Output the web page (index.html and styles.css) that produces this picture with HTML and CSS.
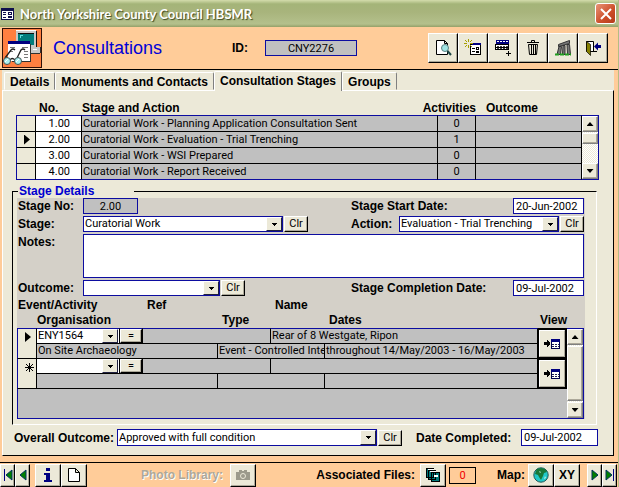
FILE: index.html
```html
<!DOCTYPE html>
<html lang="en">
<head>
<meta charset="utf-8">
<title>North Yorkshire County Council HBSMR</title>
<link rel="stylesheet" href="styles.css">
</head>
<body>
<div class="window">
  <div class="titlebar">
    <svg class="app-icon" width="13" height="12" viewBox="0 0 13 12" shape-rendering="crispEdges" aria-hidden="true"><path fill="#10104c" d="M0 0h13v12H0z"/><path fill="#fff" d="M1 3h11v8H1z"/><path stroke="#10104c" fill="none" d="M2 4.500h3M2 6.500h3M2 9.500h3M7.500 4.500h3v2h-3zM7.500 8.500h3v1h-3z"/></svg>
    <h1 class="window-title">North Yorkshire County Council HBSMR</h1>
    <button class="close" aria-label="Close"><svg width="12" height="12" viewBox="0 0 12 12"><path d="M1 1l10 10M11 1L1 11" stroke="#fff" stroke-width="2"/></svg></button>
  </div>

  <header class="header">
    <svg class="logo" width="40" height="40" viewBox="0 0 40 40" shape-rendering="crispEdges" aria-hidden="true">
      <path fill="#ff7f40" stroke="#301008" d="M.5.5h39v39H.5z"/>
      <path fill="#c8c8c8" d="M14 3h20v16H14z"/><path fill="#fff" d="M14 2h20v1H14z"/><path fill="#101010" d="M34 3h1v16h-1zM16 5h16v1H16z"/><path fill="#007c7c" d="M16 6h16v11H16z"/><path fill="#60e0e0" d="M18 7h3v1h-2v2h-1z"/>
      <path fill="#c8c8c8" d="M28 19h10v6H28z"/><path fill="#303030" d="M28 25h10v1H28zM38 19h1v6h-1z"/><path fill="#fff" d="M31 21h4v1h-4z"/>
      <path fill="#fff" d="M6 13h22v20H6z"/><path fill="#000080" d="M6 13h22v3H6z"/><path fill="#303030" d="M28 16h1v18H10v-1h18z"/>
      <path stroke="#777" fill="none" d="M8 19.500h5M20 19.500h6M22 23.500h4M22 26.500h4M22 29.500h4M8 23.500h3"/>
      <g shape-rendering="auto"><path d="M3 30l6-8q2-2 4 0M15 30l4-8q2-2 4 0M8 32q2-3 5 0" fill="none" stroke="#202020" stroke-width="1.300"/><circle cx="5" cy="33" r="3.500" fill="#a8f0f0" stroke="#405050"/><circle cx="16" cy="33" r="3.500" fill="#a8f0f0" stroke="#405050"/><path d="M3 34l3-3M14 34l3-3" stroke="#fff"/></g>
    </svg>
    <h2 class="form-title">Consultations</h2>
    <label class="id-label" for="cid">ID:</label>
    <input class="field shaded id-field" id="cid" value="CNY2276" readonly>
    <div class="toolbar">
      <button class="btn tool" aria-label="Preview"><svg width="18" height="18" viewBox="0 0 18 18"><path fill="#fff" stroke="#000" d="M2.500 1.500h8l3 3v11h-11zM10.500 1.500v3h3"/><circle cx="11" cy="9" r="3.500" fill="#a0e4e4" stroke="#5c8080"/><path d="M13.500 12l3.500 4" stroke="#204848" stroke-width="2"/></svg></button>
      <button class="btn tool" aria-label="New record"><svg width="18" height="18" viewBox="0 0 18 18" shape-rendering="crispEdges"><path fill="#fff" stroke="#000" d="M6.500 5.500h10v10h-10z"/><path fill="#000080" d="M8 4h9v2H8z"/><path stroke="#000" fill="none" d="M8 9.500h3M8 12.500h3M12.500 8.500h2v2h-2zM12.500 12.500h2v1h-2z"/><path stroke="#a8a000" shape-rendering="auto" d="M4.500 0v3M4.500 6v3M0 4.500h3M6 4.500h3M1 1l2 2M8 1L6 3M1 8l2-2M6 6l2 2"/></svg></button>
      <button class="btn tool" aria-label="Add row"><svg width="18" height="18" viewBox="0 0 18 18" shape-rendering="crispEdges"><path fill="#000080" d="M2 1h13v4H2z"/><path stroke="#fff" stroke-dasharray="2 1" d="M3 2.500h11"/><path fill="#fff" stroke="#000" d="M1.500 5.500h13v5h-13zM1.500 8h13"/><path stroke="#404040" stroke-dasharray="2 1" d="M3 7.500h11M3 9.500h11"/><path stroke="#000" d="M12 14.500h5M14.500 12v5"/></svg></button>
      <button class="btn tool" aria-label="Delete"><svg width="18" height="18" viewBox="0 0 18 18"><path fill="none" stroke="#000" d="M3 3.500h12M7.500 3V1.500h3V3M4.500 5.500h9l-1 10h-7zM7.500 6v9M9.500 6v9M11.500 6v9"/></svg></button>
      <button class="btn tool" aria-label="Monuments"><svg width="18" height="18" viewBox="0 0 18 18"><path fill="#777" stroke="#333" d="M4.500 5.500l11-4v3l-11 3zM5 7.500h2.500l-1 8H3zM9 6.500h2v9H8.500zM13 5.500h2.500l1 10h-3z"/><path d="M1 15.500h16" stroke="#20a020" stroke-width="2" stroke-dasharray="4 1"/></svg></button>
      <button class="btn tool" aria-label="Exit"><svg width="18" height="18" viewBox="0 0 18 18"><path fill="#fff" stroke="#000" d="M2.500 2.500h7v10h-7z"/><path fill="#858000" stroke="#000" stroke-width=".7" d="M2.500 2.500l4 3v11l-4-4z"/><path stroke="#000" d="M9 12.500h4"/><path fill="#000080" d="M10 7.500l4-4V6h3v3h-3v2.500z"/></svg></button>
    </div>
  </header>

  <nav class="tabs">
    <a class="tab" href="#details">Details</a>
    <a class="tab" href="#monuments">Monuments and Contacts</a>
    <a class="tab active" href="#stages" aria-current="page">Consultation Stages</a>
    <a class="tab" href="#groups">Groups</a>
  </nav>

  <main class="page" id="stages">
    <div class="scroll-table stage-list">
      <table class="stages">
        <colgroup><col class="c-sel"><col class="c-no"><col><col class="c-act"><col class="c-out"></colgroup>
        <thead><tr><th></th><th>No.</th><th>Stage and Action</th><th class="act-head"><span>Activities</span></th><th class="out-head">Outcome</th></tr></thead>
        <tbody>
          <tr><td></td><td>1.00</td><td>Curatorial Work - Planning Application Consultation Sent</td><td>0</td><td></td></tr>
          <tr><td><i class="marker"></i></td><td>2.00</td><td>Curatorial Work - Evaluation - Trial Trenching</td><td>1</td><td></td></tr>
          <tr><td></td><td>3.00</td><td>Curatorial Work - WSI Prepared</td><td>0</td><td></td></tr>
          <tr><td></td><td>4.00</td><td>Curatorial Work - Report Received</td><td>0</td><td></td></tr>
        </tbody>
      </table>
      <div class="scrollbar"><button class="btn up" aria-label="Scroll up"></button><div class="btn thumb"></div><button class="btn down" aria-label="Scroll down"></button></div>
    </div>

    <fieldset class="group">
      <legend>Stage Details</legend>
      <div class="group-body">
        <div class="row">
          <div class="half"><label for="sno">Stage No:</label><input class="field shaded stage-no" id="sno" value="2.00" readonly></div>
          <div class="half spread"><label for="start">Stage Start Date:</label><input class="field date" id="start" value="20-Jun-2002"></div>
        </div>
        <div class="row">
          <div class="half"><label for="stage">Stage:</label><span class="combo stage-combo"><select class="field" id="stage"><option>Curatorial Work</option></select></span><button class="btn clr">Clr</button></div>
          <div class="half action"><label for="action">Action:</label><span class="combo grow"><select class="field" id="action"><option>Evaluation - Trial Trenching</option></select></span><button class="btn clr">Clr</button></div>
        </div>
        <div class="row notes"><label for="notes">Notes:</label><textarea class="field" id="notes"></textarea></div>
        <div class="row">
          <div class="half"><label for="outcome">Outcome:</label><span class="combo outcome-combo"><select class="field" id="outcome"><option></option></select></span><button class="btn clr">Clr</button></div>
          <div class="half spread"><label for="done">Stage Completion Date:</label><input class="field date" id="done" value="09-Jul-2002"></div>
        </div>

        <div class="scroll-table event-list">
          <table class="events">
            <colgroup><col class="e-sel"><col class="e-id"><col class="e-eq"><col class="e-ref"><col class="e-typ"><col class="e-nam"><col><col class="e-view"></colgroup>
            <thead>
              <tr><th class="first" colspan="3">Event/Activity</th><th class="in" colspan="2">Ref</th><th class="in" colspan="3">Name</th></tr>
              <tr><th></th><th colspan="3">Organisation</th><th class="in" colspan="2">Type</th><th class="in">Dates</th><th class="view-head">View</th></tr>
            </thead>
            <tbody>
              <tr><td class="sel" rowspan="2"><i class="marker"></i></td><td class="entry"><span class="combo"><select class="field" aria-label="Event"><option>ENY1564</option></select></span></td><td class="entry"><button class="btn eq">=</button></td><td colspan="2"></td><td colspan="2">Rear of 8 Westgate, Ripon</td><td class="view" rowspan="2"><button class="btn" aria-label="View event"><svg width="18" height="12" viewBox="0 0 18 12" shape-rendering="crispEdges"><path d="M1 4h3V2h1v1h1v1h1v3H6v1H5v1H4V7H1z"/><path fill="#fff" stroke="#000050" d="M8.500 1.500h8v9h-8z"/><path fill="#000080" d="M8 1h9v3H8z"/><path stroke="#202050" stroke-dasharray="2 1" d="M9 6.500h7M9 8.500h7"/></svg></button></td></tr>
              <tr><td colspan="3">On Site Archaeology</td><td colspan="2">Event - Controlled Inte</td><td>throughout 14/May/2003 - 16/May/2003</td></tr>
              <tr><td class="sel new" rowspan="2"><svg width="11" height="11" viewBox="0 0 11 11"><path d="M5.500 1v9M1 5.500h9M2 2l7 7M9 2L2 9" stroke="#000"/></svg></td><td class="entry"><span class="combo"><select class="field" aria-label="New event"><option></option></select></span></td><td class="entry"><button class="btn eq">=</button></td><td colspan="2"></td><td colspan="2"></td><td class="view" rowspan="2"><button class="btn" aria-label="View new event"><svg width="18" height="12" viewBox="0 0 18 12" shape-rendering="crispEdges"><path d="M1 4h3V2h1v1h1v1h1v3H6v1H5v1H4V7H1z"/><path fill="#fff" stroke="#000050" d="M8.500 1.500h8v9h-8z"/><path fill="#000080" d="M8 1h9v3H8z"/><path stroke="#202050" stroke-dasharray="2 1" d="M9 6.500h7M9 8.500h7"/></svg></button></td></tr>
              <tr><td colspan="3"></td><td colspan="2"></td><td></td></tr>
              <tr class="filler"><td colspan="8"></td></tr>
            </tbody>
          </table>
          <div class="scrollbar"><button class="btn up" aria-label="Scroll up"></button><div class="btn thumb"></div><button class="btn down" aria-label="Scroll down"></button></div>
        </div>
      </div>
    </fieldset>

    <div class="overall">
      <label for="overall">Overall Outcome:</label>
      <span class="combo grow"><select class="field" id="overall"><option>Approved with full condition</option></select></span><button class="btn clr">Clr</button>
      <label class="completed" for="completed">Date Completed:</label>
      <input class="field" id="completed" value="09-Jul-2002">
    </div>
  </main>

  <footer class="footer">
    <div class="cluster">
      <button class="btn nav" aria-label="First record"><svg width="10" height="12" viewBox="0 0 10 12"><path d="M1.500 0v12" stroke="#000080"/><path d="M9 1v10L3 6z" fill="#008000" stroke="#003060"/></svg></button>
      <button class="btn nav" aria-label="Previous record"><svg width="10" height="12" viewBox="0 0 10 12"><path d="M8 1v10L2 6z" fill="#008000" stroke="#003060"/></svg></button>
      <button class="btn foot info" aria-label="Information"><svg width="12" height="16" viewBox="0 0 12 16"><path fill="#000080" d="M4 1h4v3H4zM2 6h6v7h2v2H2v-2h2V8H2z"/></svg></button>
      <button class="btn foot" aria-label="Document"><svg width="12" height="14" viewBox="0 0 12 14"><path fill="#fff" stroke="#000" d="M.5.5h7l4 4v9H.5zM7.500.5v4h4"/></svg></button>
    </div>
    <div class="cluster photo">
      <span class="disabled">Photo Library:</span>
      <button class="btn foot" disabled aria-label="Photo library"><svg width="16" height="12" viewBox="0 0 16 12"><path fill="#9c9a8c" d="M1 3h3V1h3v1h2V1h3v2h3v8H1z"/><circle cx="8" cy="7" r="2.500" fill="#9c9a8c" stroke="#ece9d8"/></svg></button>
    </div>
    <div class="cluster files">
      <span>Associated Files:</span>
      <button class="btn foot" aria-label="Associated files"><svg width="16" height="16" viewBox="0 0 16 16" shape-rendering="crispEdges"><path fill="#007878" stroke="#000" d="M1.500 1.500h7v9h-7zM3.500 3.500h7v9h-7zM6.500 5.500h8v9h-8z"/><path stroke="#fff" d="M3 2.500h6M5 4.500h6"/><path fill="#fff" d="M9 8h4v2H9z"/></svg></button>
      <output class="count">0</output>
    </div>
    <div class="cluster map">
      <span>Map:</span>
      <button class="btn foot" aria-label="Map"><svg width="16" height="16" viewBox="0 0 16 16"><circle cx="8" cy="8" r="7.200" fill="#20c8c8" stroke="#205858"/><path fill="#187838" d="M4 2l4-1 4 1 2 3-3 1-1 3-2 4-2-3-1-2-3-1 1-3z"/><path fill="#c8f0e0" d="M6 4l2 1-1 1zM12 9l1 2-2 1z"/></svg></button>
      <button class="btn foot xy">XY</button>
    </div>
    <div class="cluster next">
      <button class="btn nav" aria-label="Next record"><svg width="10" height="12" viewBox="0 0 10 12"><path d="M2 1v10l6-5z" fill="#008000" stroke="#003060"/></svg></button>
      <button class="btn nav" aria-label="Last record"><svg width="10" height="12" viewBox="0 0 10 12"><path d="M8.500 0v12" stroke="#000080"/><path d="M1 1v10l6-5z" fill="#008000" stroke="#003060"/></svg></button>
    </div>
  </footer>
</div>
</body>
</html>
```
FILE: styles.css
```css
:root {
  --face: #ece9d8;
  --peach: #ffcc99;
  --blue: #0c0ca0;
  --grey: #c0c0c0;
}
*, *::before, *::after { box-sizing: border-box; }
body {
  margin: 0;
  background: var(--peach);
  color: #000;
  font: 11px/14px Roboto, "Liberation Sans", Arial, sans-serif;
}
button, input, select, textarea { font: inherit; color: inherit; margin: 0; padding: 0; border-radius: 0; }
svg { display: block; flex: none; }
label, th, legend, .tab, .cluster span { font: bold 12px/14px "Liberation Sans", Arial, sans-serif; white-space: nowrap; }

.window { display: flex; flex-direction: column; min-height: 100vh; border-right: 1px solid #b4bc84; }

.titlebar {
  display: flex; align-items: center; gap: 6px; height: 27px; padding: 0 2px 0 1px;
  background: linear-gradient(#d4dcac 0, #a4b478 4px, #a8b47c 12px, #b4c08c 24px, #94a068 27px);
}
.window-title { flex: 1; margin: 0; color: #fff; font: bold 13px/18px Lato, "Liberation Sans", sans-serif; text-shadow: 1px 1px 1px #3c4820; }
.close {
  display: flex; align-items: center; justify-content: center; width: 21px; height: 21px;
  border: 1px solid #fff; border-radius: 3px; background: linear-gradient(135deg, #e89478, #cc4c28 60%, #b43c1c);
}

.header { display: flex; align-items: center; height: 43px; padding: 0 10px 0 2px; border-bottom: 1px solid #000; }
.form-title { margin: 0 0 0 11px; width: 179px; color: #0000d8; font: 18px/24px "Liberation Sans", Arial, sans-serif; }
.id-label { width: 33px; }
.toolbar { display: flex; margin-left: auto; }

.btn {
  display: flex; align-items: center; justify-content: center; flex: none;
  background: var(--face); border: 1px solid; border-color: #fff #000 #000 #fff; box-shadow: inset -1px -1px #aca899;
}
.tool { width: 30px; height: 30px; }

.field {
  height: 16px; min-width: 0; padding: 0 2px; border: 1px solid var(--blue); background: #fff; outline: 0; appearance: none;
}
select.field { padding: 0 1px; }
.shaded { background: var(--grey); text-align: center; }
.id-field { width: 92px; }
.combo { position: relative; display: flex; }
.combo .field { width: 100%; }
.combo::after {
  content: ""; position: absolute; top: 1px; right: 1px; width: 16px; height: 14px; pointer-events: none;
  border: 1px solid; border-color: #fff #202040 #202040 #fff;
  background: linear-gradient(#000, #000) 5px 5px / 5px 1px no-repeat, linear-gradient(#000, #000) 6px 6px / 3px 1px no-repeat, linear-gradient(#000, #000) 7px 7px / 1px 1px no-repeat, var(--face);
}
.grow { flex: 1; }
.clr { width: 24px; height: 16px; line-height: 12px; }

.tabs { display: flex; align-items: flex-end; height: 20px; padding-left: 2px; background: var(--face); border-left: 2px solid var(--peach); margin-right: 4px; }
.tab {
  height: 18px; padding: 2px 5px 0; color: #000; text-decoration: none;
  border: 1px solid; border-color: #fff #808080 transparent #fff; border-radius: 2px 2px 0 0;
}
.tab.active { position: relative; z-index: 1; height: 20px; padding: 2px 5px; margin-bottom: -1px; background: var(--face); border-bottom: 0; }

.page {
  flex: 1; display: flex; flex-direction: column; margin: 0 4px 6px 2px; padding: 11px 14px 8px 9px;
  background: var(--face); border: 1px solid; border-color: #fff #000 #000 #fff;
}

.scroll-table { display: grid; grid-template-columns: minmax(0, 1fr) 17px; }
table { width: 100%; border-spacing: 0; table-layout: fixed; }
th { padding: 0; text-align: left; }
td { padding: 0 1px; overflow: hidden; white-space: nowrap; background: var(--grey); border: solid #000; border-width: 0 1px 1px 0; }
.marker { display: block; margin-left: auto; margin-right: 4px; width: 6px; height: 10px; background: #000; clip-path: polygon(0 0, 100% 50%, 0 100%); }

.scrollbar {
  display: flex; flex-direction: column; border: solid var(--blue); border-width: 1px 1px 1px 0;
  background: repeating-conic-gradient(#fff 0 25%, var(--face) 0 50%) 0 0 / 2px 2px;
}
.scrollbar .btn { width: 100%; height: 16px; border-color: #fff #808080 #808080 #fff; }
.up::before, .down::before { content: ""; width: 7px; height: 4px; background: #000; clip-path: polygon(50% 0, 100% 100%, 0 100%); }
.down::before { clip-path: polygon(0 0, 100% 0, 50% 100%); }
.scrollbar .down { margin-top: auto; }

.stage-list { margin-left: 4px; }
.stage-list .scrollbar { margin-top: 13px; }
.stage-list .scrollbar .thumb { height: 11px; margin-top: 1px; }
.c-sel { width: 20px; } .c-no { width: 46px; } .c-act { width: 38px; } .c-out { width: 106px; }
.stages th { height: 13px; line-height: 13px; }
.stages th:nth-child(3) { padding-left: 0; }
.stages .act-head { direction: rtl; }
.stages .out-head { padding-left: 10px; }
.stages td { height: 16px; line-height: 14px; }
.stages tbody tr:first-child td { border-top: 1px solid var(--blue); height: 17px; }
.stages tbody tr:last-child td { border-bottom-color: var(--blue); }
.stages td:first-child { border-left: 1px solid var(--blue); background: var(--face); }
.stages th:nth-child(2) { padding-left: 3px; }
.stages td:nth-child(2) { background: #fff; text-align: right; padding-right: 11px; }
.stages td:nth-child(4) { text-align: center; }

.group {
  position: relative; min-width: 0; margin: 4px 2px 0 0; padding: 0 11px 5px 4px;
  border: 1px solid; border-color: #000 #fff #fff #000;
}
.group legend { width: 116px; margin-left: 1px; padding: 0 1px; color: #0000d0; }
.group-body { background: #d4d0c8; padding: 0 1px 0 0; }
.row { display: grid; grid-template-columns: minmax(0, 1fr) 233px; height: 18px; padding-left: 1px; }
.half { display: flex; align-items: flex-start; gap: 1px; }
.half label, .notes label { width: 64px; line-height: 16px; }
.spread { justify-content: space-between; }
.half.spread label { width: auto; }
.half.action label { width: 47px; }
.stage-no { width: 55px; }
.date { width: 71px; }
.stage-combo { width: 200px; }
.outcome-combo { width: 137px; }
.row.notes { grid-template-columns: 64px minmax(0, 1fr); gap: 1px; height: 46px; }
.notes .field { width: 100%; height: 44px; resize: none; }

.event-list .scrollbar { margin-top: 30px; }
.event-list .scrollbar .thumb { height: 55px; margin-top: 1px; }
.e-sel { width: 20px; } .e-id { width: 83px; } .e-eq { width: 23px; } .e-ref { width: 75px; }
.e-typ { width: 53px; } .e-nam { width: 54px; } .e-view { width: 29px; }
.events th { height: 15px; line-height: 15px; }
.events th.first { padding-left: 1px; }
.events th.in { padding-left: 4px; }
.events th.view-head { padding-left: 2px; }
.events td { height: 15px; line-height: 14px; }
.events tbody tr:first-child td { border-top: 1px solid var(--blue); }
.events tbody tr:first-child td.view { border-top: 1px solid #000; }
.events td.sel { background: var(--face); border-left: 1px solid var(--blue); vertical-align: top; padding-top: 3px; }
.events td.sel svg { margin: 0 0 0 auto; }
.events td.entry { padding: 0; }
.entry .field { height: 14px; border: 0; }
.entry .combo::after { top: 0; }
.eq { width: 22px; height: 14px; line-height: 10px; }
.events td.view { padding: 1px; background: #000; }
.view .btn { width: 26px; height: 27px; border-color: #fff #aca899 #aca899 #fff; box-shadow: none; }
.events tr.filler td { height: 30px; border-left: 1px solid var(--blue); border-bottom-color: var(--blue); border-right: 0; }

.overall { display: flex; align-items: center; gap: 1px; margin: 4px 1px 0 2px; }
.overall > label:first-child { width: 102px; }
.overall .completed { width: 104px; margin-left: 13px; }
.overall .field { height: 17px; }
#completed { width: 77px; }
.overall .combo::after { height: 15px; }

.footer { display: flex; align-items: center; height: 25px; padding-right: 1px; border-top: 1px solid #000; }
.cluster { display: flex; align-items: center; }
.nav { width: 15px; height: 23px; }
.foot { width: 26px; height: 23px; }
.info { margin-left: 5px; }
.photo { margin-left: 54px; }
.files { margin-left: auto; }
.map { margin-left: 21px; }
.next { margin-left: 7px; }
.cluster .disabled { color: #aca899; text-shadow: 1px 1px #fff; margin-right: 7px; }
.files span { margin-right: 5px; }
.count { width: 27px; height: 17px; margin-left: 3px; border: 1px solid #000; color: #f00000; text-align: center; line-height: 15px; }
.map span { margin-right: 3px; }
.xy { font: bold 12px/14px "Liberation Sans", Arial, sans-serif; }
```
